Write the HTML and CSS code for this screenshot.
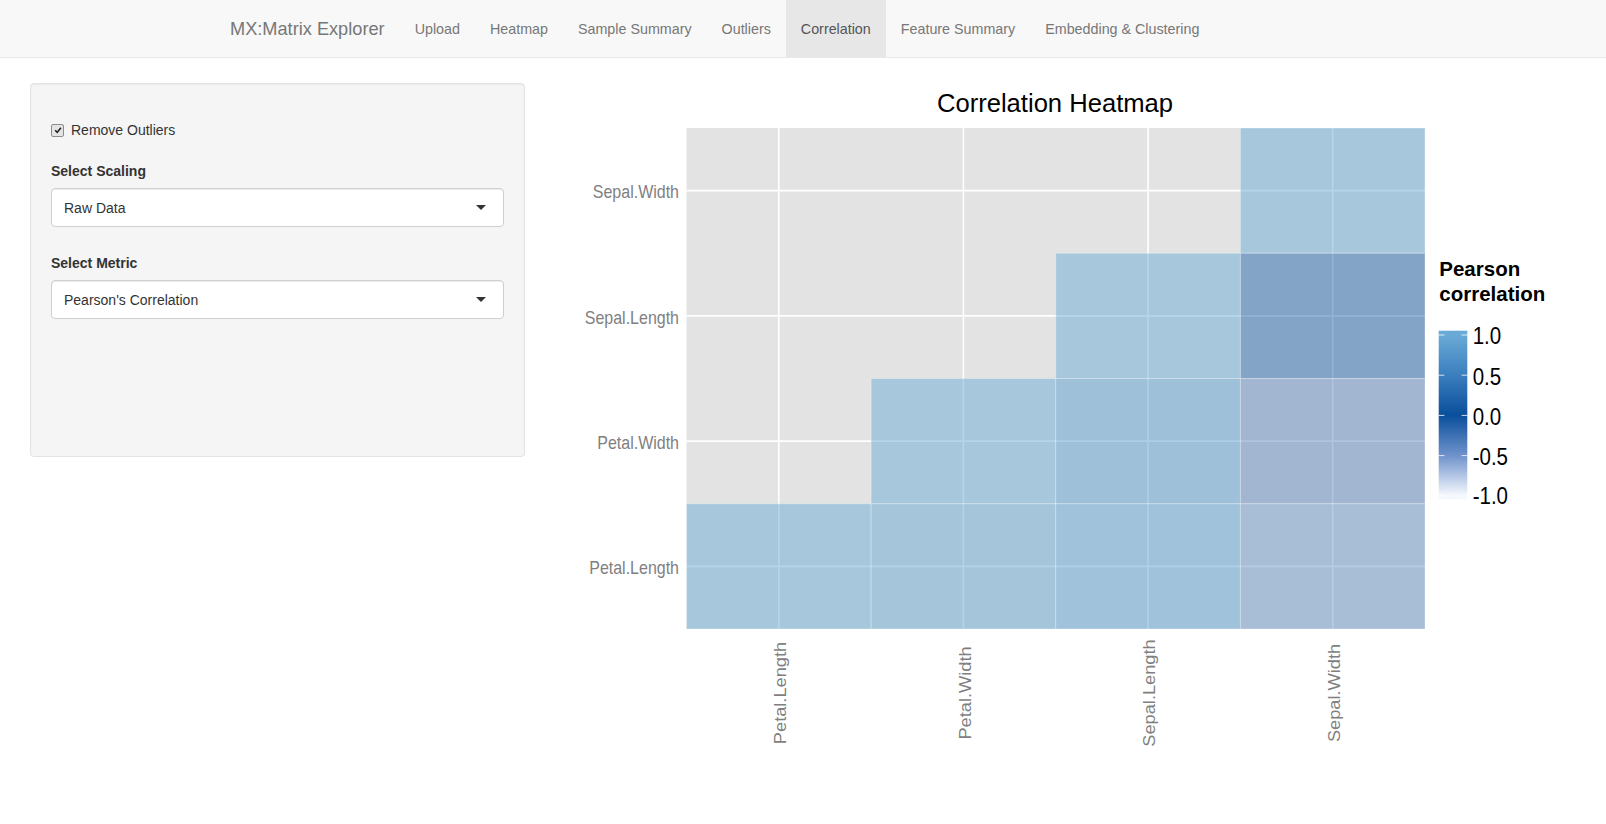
FILE: index.html
```html
<!DOCTYPE html>
<html lang="en">
<head>
<meta charset="utf-8">
<title>MX:Matrix Explorer</title>
<link rel="stylesheet" href="styles.css">
</head>
<body>
<nav class="navbar">
  <div class="nav-inner">
    <span class="brand">MX:Matrix Explorer</span>
    <ul class="nav">
      <li><a>Upload</a></li>
      <li><a>Heatmap</a></li>
      <li><a>Sample Summary</a></li>
      <li><a>Outliers</a></li>
      <li class="active"><a>Correlation</a></li>
      <li><a>Feature Summary</a></li>
      <li><a>Embedding &amp; Clustering</a></li>
    </ul>
  </div>
</nav>
<main class="main">
  <aside class="well">
    <label class="check-row">
      <span class="checkbox"><svg viewBox="0 0 12 12" width="12" height="12"><path d="M2.6 6.3 L5 8.8 L9.6 3.2" fill="none" stroke="#222" stroke-width="1.8"/></svg></span>
      <span class="check-text">Remove Outliers</span>
    </label>
    <div class="form-group first">
      <div class="ctl-label">Select Scaling</div>
      <div class="select"><span>Raw Data</span><i class="caret"></i></div>
    </div>
    <div class="form-group">
      <div class="ctl-label">Select Metric</div>
      <div class="select"><span>Pearson's Correlation</span><i class="caret"></i></div>
    </div>
  </aside>
  <svg class="plot" width="1021" height="700" viewBox="555 83 1021 700" xmlns="http://www.w3.org/2000/svg">
    <defs>
      <linearGradient id="bar" x1="0" y1="0" x2="0" y2="1">
        <stop offset="0.025" stop-color="#6aaad6"/>
        <stop offset="0.26" stop-color="#3b7fbf"/>
        <stop offset="0.5" stop-color="#0a4f9b"/>
        <stop offset="0.74" stop-color="#6f92cb"/>
        <stop offset="0.975" stop-color="#f4f7fd"/>
      </linearGradient>
    </defs>
    <text class="title" x="1055" y="112" text-anchor="middle">Correlation Heatmap</text>
    <rect x="686.5" y="128" width="738.5" height="501" fill="#e3e3e3"/>
    <g stroke="#fff" stroke-width="1.6">
      <line x1="686.5" x2="1425" y1="190.6" y2="190.6"/>
      <line x1="686.5" x2="1425" y1="315.9" y2="315.9"/>
      <line x1="686.5" x2="1425" y1="441.1" y2="441.1"/>
      <line x1="686.5" x2="1425" y1="566.4" y2="566.4"/>
      <line y1="128" y2="629" x1="778.8" x2="778.8"/>
      <line y1="128" y2="629" x1="963.4" x2="963.4"/>
      <line y1="128" y2="629" x1="1148.1" x2="1148.1"/>
      <line y1="128" y2="629" x1="1332.7" x2="1332.7"/>
    </g>
    <g fill-opacity="0.5" stroke="#fff" stroke-opacity="0.3" stroke-width="1">
      <rect x="1240.4" y="128" width="184.6" height="125.25" fill="#6baed6"/>
      <rect x="1055.75" y="253.25" width="184.65" height="125.25" fill="#6baed6"/>
      <rect x="1240.4" y="253.25" width="184.6" height="125.25" fill="#2365a9"/>
      <rect x="871.1" y="378.5" width="184.65" height="125.25" fill="#6baed6"/>
      <rect x="1055.75" y="378.5" width="184.65" height="125.25" fill="#599dcd"/>
      <rect x="1240.4" y="378.5" width="184.6" height="125.25" fill="#6389bf"/>
      <rect x="686.5" y="503.75" width="184.6" height="125.25" fill="#6baed6"/>
      <rect x="871.1" y="503.75" width="184.65" height="125.25" fill="#67a7d3"/>
      <rect x="1055.75" y="503.75" width="184.65" height="125.25" fill="#5da1d1"/>
      <rect x="1240.4" y="503.75" width="184.6" height="125.25" fill="#6d97c9"/>
    </g>
    <g class="axis" text-anchor="end">
      <text transform="translate(679 198.3) scale(1 1.14)">Sepal.Width</text>
      <text transform="translate(679 323.6) scale(1 1.14)">Sepal.Length</text>
      <text transform="translate(679 448.8) scale(1 1.14)">Petal.Width</text>
      <text transform="translate(679 574.1) scale(1 1.14)">Petal.Length</text>
    </g>
    <g class="axis" text-anchor="middle">
      <text transform="translate(786 693) rotate(-90) scale(1.14 1)">Petal.Length</text>
      <text transform="translate(970.6 693) rotate(-90) scale(1.14 1)">Petal.Width</text>
      <text transform="translate(1155.3 693) rotate(-90) scale(1.14 1)">Sepal.Length</text>
      <text transform="translate(1339.9 693) rotate(-90) scale(1.14 1)">Sepal.Width</text>
    </g>
    <text class="legend-title" x="1439.3" y="276">Pearson</text>
    <text class="legend-title" x="1439.3" y="300.7">correlation</text>
    <rect x="1438.7" y="330.7" width="28.6" height="168.6" fill="url(#bar)"/>
    <g stroke="#fff" stroke-width="1" stroke-opacity="0.8">
      <line x1="1438.7" x2="1444.4" y1="335" y2="335"/><line x1="1461.6" x2="1467.3" y1="335" y2="335"/>
      <line x1="1438.7" x2="1444.4" y1="375.2" y2="375.2"/><line x1="1461.6" x2="1467.3" y1="375.2" y2="375.2"/>
      <line x1="1438.7" x2="1444.4" y1="415.4" y2="415.4"/><line x1="1461.6" x2="1467.3" y1="415.4" y2="415.4"/>
      <line x1="1438.7" x2="1444.4" y1="455.6" y2="455.6"/><line x1="1461.6" x2="1467.3" y1="455.6" y2="455.6"/>
      <line x1="1438.7" x2="1444.4" y1="495.8" y2="495.8"/><line x1="1461.6" x2="1467.3" y1="495.8" y2="495.8"/>
    </g>
    <g class="legend-tick">
      <text transform="translate(1472.7 344.3) scale(1 1.15)">1.0</text>
      <text transform="translate(1472.7 385) scale(1 1.15)">0.5</text>
      <text transform="translate(1472.7 424.7) scale(1 1.15)">0.0</text>
      <text transform="translate(1472.7 464.5) scale(1 1.15)">-0.5</text>
      <text transform="translate(1472.7 504) scale(1 1.15)">-1.0</text>
    </g>
  </svg>
</main>
</body>
</html>
```
FILE: styles.css
```css
* { box-sizing: border-box; }
html, body { margin: 0; padding: 0; background: #fff; }
body {
  font-family: "Liberation Sans", Arial, Helvetica, sans-serif;
  font-size: 14px;
  color: #333;
}
.navbar {
  height: 58px;
  background: #f8f8f8;
  border-bottom: 1px solid #e7e7e7;
}
.nav-inner {
  display: flex;
  height: 57px;
  padding-left: 215px;
}
.brand {
  padding: 0 15px;
  font-size: 18.2px;
  line-height: 58px;
  color: #777;
}
.nav {
  display: flex;
  list-style: none;
  margin: 0;
  padding: 0;
}
.nav a {
  display: block;
  padding: 0 15px;
  font-size: 14.3px;
  line-height: 58px;
  height: 57px;
  color: #777;
}
.nav .active a {
  background: #e7e7e7;
  color: #555;
}
.main {
  display: flex;
  align-items: flex-start;
  padding: 25px 30px 0 30px;
}
.well {
  flex: none;
  width: 495px;
  height: 374px;
  padding: 36px 20px 19px 20px;
  background: #f5f5f5;
  border: 1px solid #e3e3e3;
  border-radius: 4px;
  box-shadow: inset 0 1px 1px rgba(0,0,0,.05);
}
.check-row {
  display: flex;
  align-items: center;
  height: 20px;
}
.checkbox {
  width: 13px;
  height: 13px;
  border: 1px solid #8c8c8c;
  border-radius: 2px;
  background: #e4e4e4;
  display: flex;
  align-items: center;
  justify-content: center;
  margin-right: 7px;
}
.checkbox svg { width: 10px; height: 10px; }
.check-text { line-height: 20px; }
.form-group { margin-top: 26px; }
.form-group.first { margin-top: 21px; }
.ctl-label {
  font-weight: bold;
  line-height: 20px;
  margin-bottom: 7px;
}
.select {
  display: flex;
  align-items: center;
  justify-content: space-between;
  height: 39px;
  padding: 0 17px 0 12px;
  background: #fff;
  border: 1px solid #cfcfcf;
  border-radius: 4px;
  box-shadow: inset 0 1px 1px rgba(0,0,0,.075);
  color: #333;
}
.caret {
  width: 0;
  height: 0;
  border-left: 5px solid transparent;
  border-right: 5px solid transparent;
  border-top: 5px solid #333;
}
.plot {
  flex: none;
  display: block;
  margin-left: 30px;
}
.plot text { font-family: "Liberation Sans", Arial, Helvetica, sans-serif; }
.title { font-size: 25.6px; fill: #000; }
.axis text { font-size: 16px; fill: #7f7f7f; }
.legend-title { font-size: 20.5px; font-weight: bold; fill: #000; }
.legend-tick text { font-size: 20.5px; fill: #000; }
```
